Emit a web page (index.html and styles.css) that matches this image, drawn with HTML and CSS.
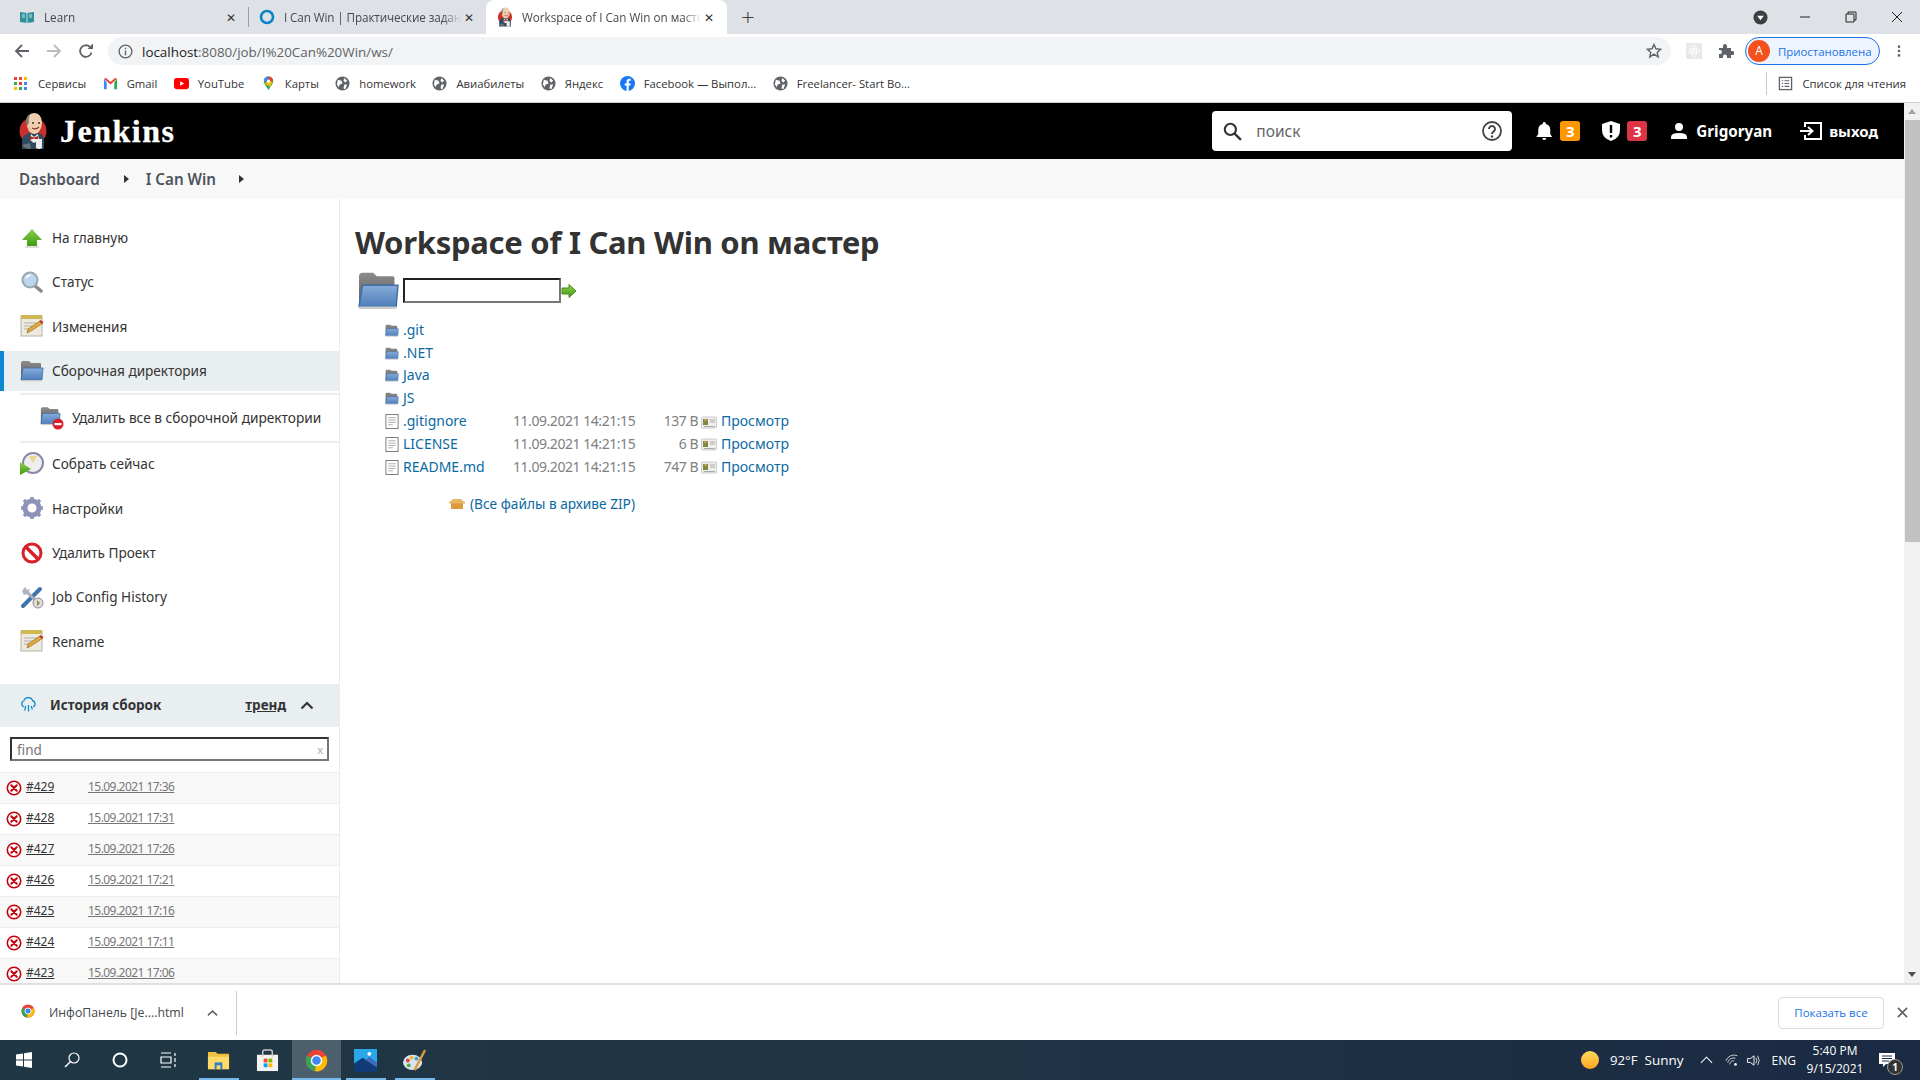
FILE: index.html
```html
<!doctype html>
<html>
<head>
	<meta charset="utf-8">
	<title>Workspace of I Can Win on мастер</title>
	<link rel="stylesheet" href="styles.css">
</head>

<body>

<svg class="defs" width="0" height="0">
	<defs>
		<linearGradient id="blue" x1="0" y1="0" x2="0" y2="1"><stop offset="0" stop-color="#86abd9"/><stop offset="1" stop-color="#4f7fbc"/></linearGradient>
		<linearGradient id="grey" x1="0" y1="0" x2="0" y2="1"><stop offset="0" stop-color="#8b8b8b"/><stop offset="1" stop-color="#5c5c5c"/></linearGradient>
		<linearGradient id="green" x1="0" y1="0" x2="0" y2="1"><stop offset="0" stop-color="#8fd14f"/><stop offset="1" stop-color="#3e9a0f"/></linearGradient>
		<symbol id="folder" viewBox="0 0 24 22">
			<path d="M1 3q0-2 2-2h6l2 2h9q1 0 1 1v15H1z" fill="url(#grey)"/>
			<path d="M1 20L3 8h20l-1 12z" fill="url(#blue)" stroke="#3f6ea8" stroke-width=".8"/>
			<rect x="1" y="20" width="21" height="1.4" fill="#ccc"/>
		</symbol>
		<symbol id="file" viewBox="0 0 14 16">
			<rect x=".5" y=".5" width="13" height="15" fill="#fff" stroke="#777"/>
			<path d="M3 4h8M3 6.5h8M3 9h8M3 11.5h5" stroke="#aaa"/>
		</symbol>
		<symbol id="view" viewBox="0 0 16 14">
			<rect x=".5" y="2" width="15" height="11" rx="1" fill="#eee" stroke="#ccc"/>
			<rect x="2" y="4" width="5" height="6" fill="#7d8a3e"/>
			<circle cx="4.5" cy="5" r="1.3" fill="#c9a066"/>
			<path d="M9 5h5M9 7h5M3 11.5h11" stroke="#aaa"/>
		</symbol>
		<symbol id="note" viewBox="0 0 24 24">
			<rect x="1" y="2" width="21" height="20" fill="#eeeade" stroke="#b5b2a6"/>
			<rect x="1" y="1" width="21" height="4" fill="#cfb754"/>
			<path d="M4 9h15M4 12h9M4 15h6" stroke="#b0b0b0"/>
			<path d="M7 19l1-4L20 7l3 2-12 8z" fill="#e3a93b" stroke="#8a5a1a" stroke-width=".6"/>
			<path d="M19 7.500l1.500-1.500 3 2-1.500 2z" fill="#c9372c"/>
		</symbol>
		<symbol id="fail" viewBox="0 0 16 16">
			<circle cx="8" cy="8" r="6.700" fill="#fff" stroke="#c4000a" stroke-width="1.600"/>
			<path d="M5.300 5.300l5.400 5.400M10.700 5.300l-5.400 5.400" stroke="#c4000a" stroke-width="2" stroke-linecap="round"/>
		</symbol>
		<symbol id="globe" viewBox="0 0 16 16">
			<circle cx="8" cy="8" r="7.500" fill="#5f6368"/>
			<path d="M3 4l4 1 1 3-3 1-1 3-2-3zM10 2l3 3-2 2-2-2zM10 9l3 0-2 5-2-1z" fill="#fff"/>
		</symbol>
		<symbol id="butler" viewBox="0 0 28 38">
			<circle cx="14" cy="19" r="13.500" fill="#c9302c"/>
			<path d="M3 37V27q2-5 8-6h8q6 1 6 7v9z" fill="#2f4a5f"/>
			<path d="M12 22l3 3 4-3 1 6-5 3-4-3z" fill="#f3f3f3"/>
			<path d="M11 24l4 1.500 4-1.500v4l-4-1.500-4 1.500z" fill="#b3261e"/>
			<path d="M8 11Q8 1 15 1q7 0 8 9 0 5-2 8-2 4-6 4-7-1-7-11z" fill="#f0cfae"/>
			<path d="M8 14Q6 8 8 5q1-2 3-3-2 5-1 9-1 1-2 3z" fill="#7d7d7d"/>
			<path d="M8 14q1 4 3 6l1-3-2-3z" fill="#e8bd98"/>
			<circle cx="14" cy="11" r=".9" fill="#222"/><circle cx="20" cy="11" r=".9" fill="#222"/>
			<path d="M13 16q4 2 7-1" fill="none" stroke="#8a3a2a" stroke-width="1.200"/>
			<path d="M17 27h6v9q-3 2-6 0z" fill="#eee"/>
			<path d="M3 33q3 4 9 4l-1-6z" fill="#f0cfae" opacity=".3"/>
		</symbol>
	</defs>
</svg>

<div class="tabstrip">
	<div class="tab">
		<svg class="tab-icon" viewBox="0 0 16 16"><path d="M1 3l7 1 7-1v10l-7 1-7-1z" fill="#2f8f9d"/><path d="M8 4v10" stroke="#bfe3e8"/><path d="M3 6h3M3 8h3M10 6h3M10 8h3" stroke="#bfe3e8"/></svg>
		<span class="tab-title">Learn</span>
		<span class="tab-close">✕</span>
	</div>
	<div class="tab tab-second">
		<svg class="tab-icon" viewBox="0 0 16 16"><circle cx="8" cy="8" r="6" fill="none" stroke="#0a84c6" stroke-width="2.600"/></svg>
		<span class="tab-title">I Can Win | Практические задан</span>
		<span class="tab-close">✕</span>
	</div>
	<div class="tab tab-active">
		<svg class="tab-icon"><use href="#butler"/></svg>
		<span class="tab-title">Workspace of I Can Win on масте</span>
		<span class="tab-close">✕</span>
	</div>
	<span class="new-tab">+</span>
	<div class="window-btns">
		<svg class="win-circle" viewBox="0 0 16 16"><circle cx="8" cy="8" r="7.500" fill="#3c4043"/><path d="M4.500 6h7L8 11z" fill="#fff"/></svg>
		<svg class="win-btn" viewBox="0 0 12 12"><path d="M1 6h10" stroke="#222"/></svg>
		<svg class="win-btn" viewBox="0 0 12 12"><path d="M3 3V1h8v8H9M1 3h8v8H1z" fill="none" stroke="#222"/></svg>
		<svg class="win-btn" viewBox="0 0 12 12"><path d="M1 1l10 10M11 1L1 11" stroke="#222"/></svg>
	</div>
</div>

<div class="toolbar">
	<svg class="nav-icon" viewBox="0 0 16 16"><path d="M15 8H2M8 2L2 8l6 6" fill="none" stroke="#5f6368" stroke-width="1.800"/></svg>
	<svg class="nav-icon" viewBox="0 0 16 16"><path d="M1 8h13M8 2l6 6-6 6" fill="none" stroke="#b9bcc0" stroke-width="1.800"/></svg>
	<svg class="nav-icon" viewBox="0 0 16 16"><path d="M13.500 9.500A5.800 5.800 0 1 1 12 4" fill="none" stroke="#5f6368" stroke-width="1.800"/><path d="M9.500 6H15V.5z" fill="#5f6368"/></svg>
	<div class="omnibox">
		<svg class="info" viewBox="0 0 16 16"><circle cx="8" cy="8" r="6.800" fill="none" stroke="#5f6368" stroke-width="1.400"/><path d="M8 7v5M8 4v1.600" stroke="#5f6368" stroke-width="1.500"/></svg>
		<span class="url"><b>localhost</b>:8080/job/I%20Can%20Win/ws/</span>
		<svg class="star" viewBox="0 0 16 16"><path d="M8 1.500l2 4.300 4.600.5-3.400 3.100 1 4.600L8 11.200l-4.200 2.800 1-4.600L1.400 6.300 6 5.800z" fill="none" stroke="#5f6368" stroke-width="1.400"/></svg>
	</div>
	<svg class="ext-react" viewBox="0 0 16 16"><rect width="16" height="16" fill="#e8e8e8"/><circle cx="8" cy="8" r="1.400" fill="#fff"/><g fill="none" stroke="#fff"><ellipse cx="8" cy="8" rx="6" ry="2.500"/><ellipse cx="8" cy="8" rx="2.500" ry="6"/></g></svg>
	<svg class="ext-puzzle" viewBox="0 0 16 16"><path d="M1 5h4V3a2 2 0 0 1 4 0v2h4v3h1.500a2 2 0 0 1 0 4H13v3H9v-1.500a2 2 0 0 0-4 0V15H1v-4h1a2 2 0 0 0 0-4H1z" fill="#5f6368"/></svg>
	<div class="profile">
		<span class="avatar">A</span>
		<span>Приостановлена</span>
	</div>
	<svg class="kebab" viewBox="0 0 4 16"><circle cx="2" cy="3" r="1.500" fill="#5f6368"/><circle cx="2" cy="8" r="1.500" fill="#5f6368"/><circle cx="2" cy="13" r="1.500" fill="#5f6368"/></svg>
</div>

<div class="bookmarks">
	<span class="bm bm-apps"><svg class="bm-icon" viewBox="0 0 13 13"><g fill="#ea4335"><rect width="3" height="3"/><rect x="5" width="3" height="3"/></g><rect x="10" width="3" height="3" fill="#fbbc05"/><rect y="5" width="3" height="3" fill="#34a853"/><rect x="5" y="5" width="3" height="3" fill="#ea4335"/><rect x="10" y="5" width="3" height="3" fill="#4285f4"/><rect y="10" width="3" height="3" fill="#fbbc05"/><rect x="5" y="10" width="3" height="3" fill="#34a853"/><rect x="10" y="10" width="3" height="3" fill="#4285f4"/></svg>Сервисы</span>
	<span class="bm"><svg class="bm-icon" viewBox="0 0 16 16"><path d="M1 3v11h3V7z" fill="#4285f4"/><path d="M12 7v7h3V3z" fill="#34a853"/><path d="M1 3l7 6 7-6-2-1-5 4-5-4z" fill="#ea4335"/></svg>Gmail</span>
	<span class="bm"><svg class="bm-icon" viewBox="0 0 16 16"><rect y="2" width="16" height="12" rx="3" fill="#f00"/><path d="M6.500 5.500v5L11 8z" fill="#fff"/></svg>YouTube</span>
	<span class="bm"><svg class="bm-icon" viewBox="0 0 16 16"><path d="M8 15C5 10 3 8 3 5.500a5 5 0 0 1 10 0C13 8 11 10 8 15z" fill="#34a853"/><path d="M3 5.500a5 5 0 0 1 5-5v5z" fill="#4285f4"/><path d="M8 .5a5 5 0 0 1 5 5H8z" fill="#ea4335"/><path d="M4 8l4-2.500 4.500 1-3 5z" fill="#fbbc05"/><circle cx="8" cy="5.500" r="1.800" fill="#fff"/></svg>Карты</span>
	<span class="bm"><svg class="bm-icon"><use href="#globe"/></svg>homework</span>
	<span class="bm"><svg class="bm-icon"><use href="#globe"/></svg>Авиабилеты</span>
	<span class="bm"><svg class="bm-icon"><use href="#globe"/></svg>Яндекс</span>
	<span class="bm"><svg class="bm-icon" viewBox="0 0 16 16"><circle cx="8" cy="8" r="8" fill="#1877f2"/><path d="M7 16V10H5V8h2V6q0-3 3-3h1.500v2H10.500Q9.300 5 9.300 6v2h2.200l-.4 2H9.300v6z" fill="#fff"/></svg>Facebook — Выпол...</span>
	<span class="bm"><svg class="bm-icon"><use href="#globe"/></svg>Freelancer- Start Bo...</span>
	<span class="reading">
		<svg class="bm-icon" viewBox="0 0 16 16"><rect x="1.500" y="1.500" width="13" height="13" fill="none" stroke="#5f6368" stroke-width="1.400"/><path d="M4 5h1.500M7 5h5M4 8h1.500M7 8h5M4 11h1.500M7 11h5" stroke="#5f6368" stroke-width="1.200"/></svg>
		Список для чтения
	</span>
</div>

<div class="page">
	<div class="page-main">
		<header class="jk-header">
			<svg class="jk-logo"><use href="#butler"/></svg>
			<span class="jk-name">Jenkins</span>
			<div class="jk-search">
				<svg class="jk-search-icon" viewBox="0 0 18 18"><circle cx="7" cy="7" r="5.300" fill="none" stroke="#333" stroke-width="2"/><path d="M11 11l6 6" stroke="#333" stroke-width="2.200"/></svg>
				<span class="jk-search-text">поиск</span>
				<svg class="jk-help" viewBox="0 0 20 20"><circle cx="10" cy="10" r="9" fill="none" stroke="#444" stroke-width="1.800"/><path d="M7 8a3 3 0 1 1 4.500 2.600Q10 11.500 10 13" fill="none" stroke="#444" stroke-width="1.900"/><circle cx="10" cy="15.500" r="1.200" fill="#444"/></svg>
			</div>
			<svg class="jk-bell" viewBox="0 0 16 20"><path d="M8 1a1.500 1.500 0 0 1 1.500 2Q14 4 14 9v4l2 3H0l2-3V9q0-5 4.500-6A1.500 1.500 0 0 1 8 1zM6 17h4a2 2 0 0 1-4 0z" fill="#fff"/></svg>
			<span class="jk-badge jk-badge-orange">3</span>
			<svg class="jk-shield" viewBox="0 0 18 20"><path d="M9 0l9 3v6q0 8-9 11Q0 17 0 9V3z" fill="#fff"/><path d="M9 4v8M9 14v2.400" stroke="#000" stroke-width="2.400"/></svg>
			<span class="jk-badge jk-badge-red">3</span>
			<svg class="jk-user" viewBox="0 0 16 16"><circle cx="8" cy="4" r="4" fill="#fff"/><path d="M0 16v-2q0-4 8-4t8 4v2z" fill="#fff"/></svg>
			<span class="jk-username">Grigoryan</span>
			<svg class="jk-exit" viewBox="0 0 22 18"><path d="M5 5V1h16v16H5v-4" fill="none" stroke="#fff" stroke-width="2"/><path d="M0 9h12M8 5l4.500 4L8 13" fill="none" stroke="#fff" stroke-width="2"/></svg>
			<span class="jk-logout">выход</span>
		</header>

		<div class="crumbs">
			<span class="crumb">Dashboard</span>
			<span class="crumb-arrow"></span>
			<span class="crumb">I Can Win</span>
			<span class="crumb-arrow"></span>
		</div>

		<div class="columns">
			<aside class="sidebar">
				<nav class="side-nav">
					<a class="side-item">
						<svg class="side-icon" viewBox="0 0 24 24"><path d="M12 3L2 14h5v6h10v-6h5z" fill="url(#green)"/><rect x="5" y="20" width="14" height="2" fill="#ddd"/></svg>
						На главную
					</a>
					<a class="side-item">
						<svg class="side-icon" viewBox="0 0 24 24"><path d="M14 15l7 6" stroke="#888" stroke-width="3.500" stroke-linecap="round"/><circle cx="10" cy="10" r="7.500" fill="#bcd6f0" stroke="#9aa6b2" stroke-width="2"/><path d="M6 8q2-3 5-3" stroke="#fff" stroke-width="1.500" fill="none"/></svg>
						Статус
					</a>
					<a class="side-item">
						<svg class="side-icon"><use href="#note"/></svg>
						Изменения
					</a>
					<a class="side-item side-active">
						<svg class="side-icon"><use href="#folder"/></svg>
						Сборочная директория
					</a>
					<a class="side-item side-sub">
						<svg class="side-icon" viewBox="0 0 24 24"><use href="#folder" width="21" height="20"/><circle cx="18" cy="18" r="5.500" fill="#d8202a"/><rect x="14.500" y="17" width="7" height="2.200" fill="#fff"/></svg>
						Удалить все в сборочной директории
					</a>
					<a class="side-item">
						<svg class="side-icon" viewBox="0 0 24 24"><circle cx="13" cy="11" r="10" fill="#eee" stroke="#8b88a8" stroke-width="2"/><path d="M13 11L9 4h8z" fill="#e8d98a"/><path d="M0 10l11 7-11 6z" fill="url(#green)"/></svg>
						Собрать сейчас
					</a>
					<a class="side-item">
						<svg class="side-icon" viewBox="0 0 24 24"><circle cx="12" cy="12" r="7" fill="none" stroke="#8f92b8" stroke-width="5"/><path d="M12 1v4M12 19v4M1 12h4M19 12h4M4 4l3 3M17 17l3 3M20 4l-3 3M7 17l-3 3" stroke="#8f92b8" stroke-width="3.500"/></svg>
						Настройки
					</a>
					<a class="side-item">
						<svg class="side-icon" viewBox="0 0 24 24"><circle cx="12" cy="12" r="9" fill="#fff" stroke="#d8202a" stroke-width="3"/><path d="M5.500 5.500l13 13" stroke="#d8202a" stroke-width="3.500"/></svg>
						Удалить Проект
					</a>
					<a class="side-item">
						<svg class="side-icon" viewBox="0 0 24 24"><path d="M3 21L20 4" stroke="#3f74ad" stroke-width="4" stroke-linecap="round"/><path d="M20 20L6 6" stroke="#aab" stroke-width="3"/><path d="M2 6l3-4 2 3 3-1-2 5-4 1z" fill="#b0b4c4"/><circle cx="18" cy="18" r="5" fill="#ddd" stroke="#8b88a8"/><path d="M17 15l3 3-3 3z" fill="#a08a3a"/></svg>
						Job Config History
					</a>
					<a class="side-item side-last">
						<svg class="side-icon"><use href="#note"/></svg>
						Rename
					</a>
				</nav>

				<div class="hist-head">
					<svg class="hist-cloud" viewBox="0 0 18 16"><path d="M4 10a3.500 3.500 0 0 1 0-6.500 5 5 0 0 1 9.500 0A3.500 3.500 0 0 1 14 10" fill="none" stroke="#0b88d1" stroke-width="1.400"/><path d="M6 9l-1 5M9 8v7M12 9l1 4" stroke="#0b88d1" stroke-width="1.300"/></svg>
					<span class="hist-title">История сборок</span>
					<span class="hist-trend">тренд</span>
					<svg class="hist-chev" viewBox="0 0 14 9"><path d="M1.500 7.500L7 2l5.500 5.500" fill="none" stroke="#333" stroke-width="2.200"/></svg>
				</div>
				<div class="hist-find">
					<div class="find-input"><span>find</span><span class="find-x">x</span></div>
				</div>
				<div class="hist-rows">
					<div class="hist-row"><svg class="fail-icon"><use href="#fail"/></svg><a class="build-no">#429</a><a class="build-date">15.09.2021 17:36</a></div>
					<div class="hist-row"><svg class="fail-icon"><use href="#fail"/></svg><a class="build-no">#428</a><a class="build-date">15.09.2021 17:31</a></div>
					<div class="hist-row"><svg class="fail-icon"><use href="#fail"/></svg><a class="build-no">#427</a><a class="build-date">15.09.2021 17:26</a></div>
					<div class="hist-row"><svg class="fail-icon"><use href="#fail"/></svg><a class="build-no">#426</a><a class="build-date">15.09.2021 17:21</a></div>
					<div class="hist-row"><svg class="fail-icon"><use href="#fail"/></svg><a class="build-no">#425</a><a class="build-date">15.09.2021 17:16</a></div>
					<div class="hist-row"><svg class="fail-icon"><use href="#fail"/></svg><a class="build-no">#424</a><a class="build-date">15.09.2021 17:11</a></div>
					<div class="hist-row"><svg class="fail-icon"><use href="#fail"/></svg><a class="build-no">#423</a><a class="build-date">15.09.2021 17:06</a></div>
				</div>
			</aside>

			<main class="content">
				<h1 class="title">Workspace of I Can Win on мастер</h1>
				<div class="path-row">
					<svg class="path-folder"><use href="#folder"/></svg>
					<div class="path-input"></div>
					<svg class="path-go" viewBox="0 0 16 16"><path d="M1 5h7V1.500L15 8l-7 6.500V11H1z" fill="url(#green)" stroke="#4d8a1a"/></svg>
				</div>
				<div class="files">
					<div class="file-row"><svg class="file-icon"><use href="#folder"/></svg><a>.git</a></div>
					<div class="file-row"><svg class="file-icon"><use href="#folder"/></svg><a>.NET</a></div>
					<div class="file-row"><svg class="file-icon"><use href="#folder"/></svg><a>Java</a></div>
					<div class="file-row"><svg class="file-icon"><use href="#folder"/></svg><a>JS</a></div>
					<div class="file-row"><svg class="file-icon"><use href="#file"/></svg><a>.gitignore</a><span class="file-date">11.09.2021 14:21:15</span><span class="file-size">137 B</span><svg class="view-icon"><use href="#view"/></svg><a>Просмотр</a></div>
					<div class="file-row"><svg class="file-icon"><use href="#file"/></svg><a>LICENSE</a><span class="file-date">11.09.2021 14:21:15</span><span class="file-size">6 B</span><svg class="view-icon"><use href="#view"/></svg><a>Просмотр</a></div>
					<div class="file-row"><svg class="file-icon"><use href="#file"/></svg><a>README.md</a><span class="file-date">11.09.2021 14:21:15</span><span class="file-size">747 B</span><svg class="view-icon"><use href="#view"/></svg><a>Просмотр</a></div>
				</div>
				<div class="zip-row">
					<svg class="zip-icon" viewBox="0 0 16 12"><path d="M1 4l3-3h8l3 3z" fill="#e8b566"/><rect x="2" y="4" width="12" height="7" fill="#d99a3e"/><rect x="0" y="3.500" width="16" height="2" fill="#e8b566"/></svg>
					<a>(Все файлы в архиве ZIP)</a>
				</div>
			</main>
		</div>
	</div>

	<div class="scrollbar">
		<span class="scroll-up"></span>
		<div class="scroll-track"><div class="scroll-thumb"></div></div>
		<span class="scroll-down"></span>
	</div>
</div>

<div class="downloads">
	<svg class="dl-icon" viewBox="0 0 16 16"><circle cx="8" cy="8" r="7.500" fill="#ea4335"/><path d="M8 8L1.500 4.500A7.500 7.500 0 0 0 7 15.500z" fill="#34a853"/><path d="M8 8l-1 7.500A7.500 7.500 0 0 0 14.500 4.500z" fill="#fbbc05"/><circle cx="8" cy="8" r="3.500" fill="#4285f4" stroke="#fff"/></svg>
	<span class="dl-name">ИнфоПанель [Je....html</span>
	<svg class="dl-chev" viewBox="0 0 12 8"><path d="M1 6.500L6 2l5 4.500" fill="none" stroke="#5f6368" stroke-width="1.800"/></svg>
	<span class="dl-sep"></span>
	<span class="dl-all">Показать все</span>
	<svg class="dl-close" viewBox="0 0 12 12"><path d="M1 1l10 10M11 1L1 11" stroke="#5f6368" stroke-width="1.800"/></svg>
</div>

<footer class="taskbar">
	<svg class="tb-start" viewBox="0 0 16 16"><path d="M0 2.500l7-1v6H0zM8 1.300L16 0v7.500H8zM0 8.500h7v6l-7-1zM8 8.500h8V16l-8-1.300z" fill="#fff"/></svg>
	<span class="tb-slot"><svg class="tb-glyph" viewBox="0 0 16 16"><circle cx="10" cy="6" r="5" fill="none" stroke="#fff" stroke-width="1.200"/><path d="M6.500 9.500L1 15" stroke="#fff" stroke-width="1.400"/></svg></span>
	<span class="tb-slot"><svg class="tb-glyph" viewBox="0 0 16 16"><circle cx="8" cy="8" r="6.500" fill="none" stroke="#fff" stroke-width="2"/></svg></span>
	<span class="tb-slot"><svg class="tb-glyph" viewBox="0 0 16 16"><path d="M1 1h10M1 15h10M1 5h10v6H1zM15 1v3M15 6v4M15 12v3" fill="none" stroke="#fff" stroke-width="1.200"/></svg></span>
	<span class="tb-app-slot tb-first tb-open"><svg class="tb-app" viewBox="0 0 24 20"><path d="M1 1h8l2 2h12v16H1z" fill="#f0c040"/><rect x="1" y="6" width="22" height="13" fill="#ffd969"/><rect x="8" y="12" width="8" height="7" fill="#2a7fc8"/><rect x="10" y="15" width="4" height="4" fill="#ffd969"/></svg></span>
	<span class="tb-app-slot"><svg class="tb-app" viewBox="0 0 24 24"><rect x="1" y="6" width="22" height="17" fill="#f3f3f3"/><path d="M7 8V3q0-2 2-2h6q2 0 2 2v5" fill="none" stroke="#ccc" stroke-width="1.500"/><rect x="8" y="10" width="4" height="4" fill="#f25022"/><rect x="13" y="10" width="4" height="4" fill="#7fba00"/><rect x="8" y="15" width="4" height="4" fill="#00a4ef"/><rect x="13" y="15" width="4" height="4" fill="#ffb900"/></svg></span>
	<span class="tb-app-slot tb-active"><svg class="tb-app" viewBox="0 0 16 16"><circle cx="8" cy="8" r="7.500" fill="#ea4335"/><path d="M8 8L1.500 4.500A7.500 7.500 0 0 0 7 15.500z" fill="#34a853"/><path d="M8 8l-1 7.500A7.500 7.500 0 0 0 14.500 4.500z" fill="#fbbc05"/><circle cx="8" cy="8" r="3.500" fill="#4285f4" stroke="#fff"/></svg></span>
	<span class="tb-app-slot tb-open"><svg class="tb-app" viewBox="0 0 24 24"><rect width="24" height="24" fill="#29a8ea"/><path d="M0 24V15l9-6 15 10v5z" fill="#123a78"/><path d="M9 9l15 10v-5l-8-6-3 3z" fill="#3f6bc0"/><circle cx="16" cy="5" r="2" fill="#fff"/></svg></span>
	<span class="tb-app-slot tb-open"><svg class="tb-app" viewBox="0 0 24 24"><ellipse cx="10" cy="14" rx="10" ry="8" fill="#d8e4ea"/><circle cx="5" cy="12" r="2" fill="#e2483d"/><circle cx="9" cy="9" r="2" fill="#f2b630"/><circle cx="14" cy="10" r="2" fill="#3f9ad6"/><circle cx="6" cy="17" r="2" fill="#55a845"/><path d="M12 22L23 1" stroke="#d99a3e" stroke-width="2.500"/></svg></span>

	<div class="tray">
		<span class="sun"></span>
		<span class="temp">92°F</span>
		<span class="sunny">Sunny</span>
		<svg class="tray-chev" viewBox="0 0 14 8"><path d="M1 7l6-6 6 6" fill="none" stroke="#fff" stroke-width="1.100"/></svg>
		<svg class="tray-wifi" viewBox="0 0 16 16"><path d="M1 9a10 10 0 0 1 13-6M3 11a7 7 0 0 1 9-5M5.500 13a4 4 0 0 1 5-4" fill="none" stroke="#ddd"/><circle cx="12" cy="13" r="1.500" fill="#fff"/></svg>
		<svg class="tray-speaker" viewBox="0 0 16 16"><path d="M1 6h3l4-3v10l-4-3H1z" fill="none" stroke="#fff"/><path d="M10 5q2 3 0 6M12 3q3 5 0 10" fill="none" stroke="#ddd"/></svg>
		<span class="lang">ENG</span>
		<div class="clock"><span>5:40 PM</span><span>9/15/2021</span></div>
		<div class="notify">
			<svg class="notify-icon" viewBox="0 0 16 16"><path d="M0 1h16v11H7l-3 3v-3H0z" fill="#fff"/><path d="M3 4h10M3 6.500h10M3 9h7" stroke="#1a2a43"/></svg>
			<span class="notify-badge">1</span>
		</div>
	</div>
</footer>

</body>
</html>
```

FILE: styles.css
```css
/* base */
html, body { margin: 0; height: 100%; }
body { width: 1920px; height: 1080px; overflow: hidden; display: flex; flex-direction: column; background: #fff; color: #333; font-family: "Noto Sans", "Open Sans", sans-serif; }
a { color: inherit; }
svg { flex: none; display: block; }
.defs { position: absolute; }

/* browser tabs */
.tabstrip { height: 34px; flex: none; display: flex; align-items: center; background: #dee1e6; font-family: "Open Sans", "Noto Sans", sans-serif; font-size: 11.700px; color: #45484c; }
.tab { width: 248px; height: 34px; box-sizing: border-box; display: flex; align-items: center; padding: 0 9px 0 19px; }
.tab-second { width: 238px; position: relative; padding: 0 9px 0 11px; letter-spacing: -.1px; }
.tab-second::before { content: ""; position: absolute; left: 0; top: 7px; height: 20px; border-left: 1px solid #9a9da1; }
.tab-active { width: 241px; background: #fff; border-radius: 8px 8px 0 0; padding: 0 10px 0 11px; }
.tab-icon { width: 16px; height: 16px; margin-right: 9px; }
.tab-active .tab-icon { width: 16px; height: 20px; margin-right: 9px; }
.tab-title { flex: 1; min-width: 0; white-space: nowrap; -webkit-mask-image: linear-gradient(to right, #000 90%, transparent); mask-image: linear-gradient(to right, #000 90%, transparent); }
.tab-close { width: 16px; text-align: center; font-size: 12px; color: #333; }
.new-tab { margin-left: 14px; font-size: 24px; font-weight: 300; color: #3c4043; line-height: 1; }
.window-btns { margin-left: auto; display: flex; align-items: center; padding-right: 17px; }
.win-circle { width: 15px; height: 15px; margin-right: 31px; }
.win-btn { width: 12px; height: 12px; margin-left: 34px; }
.win-circle + .win-btn { margin-left: 0; }

/* browser toolbar */
.toolbar { height: 34px; flex: none; display: flex; align-items: center; padding-left: 14px; box-sizing: border-box; font-family: "Open Sans", "Noto Sans", sans-serif; }
.nav-icon { width: 16px; height: 16px; margin-right: 16px; }
.omnibox { width: 1563px; height: 28px; margin-left: -2px; border-radius: 14px; background: #f1f3f4; display: flex; align-items: center; padding: 0 9px 0 10px; box-sizing: border-box; font-size: 13.400px; color: #5f6368; }
.info { width: 15px; height: 15px; margin-right: 9px; }
.url { flex: 1; padding-top: 1px; }
.url b { font-weight: 400; color: #202124; }
.star { width: 16px; height: 16px; }
.ext-react { width: 16px; height: 16px; margin-left: 15px; }
.ext-puzzle { width: 16px; height: 16px; margin-left: 16px; }
.profile { width: 135px; height: 28px; margin-left: 11px; box-sizing: border-box; border: 1px solid #1a73e8; border-radius: 14px; background: #eef4fe; display: flex; align-items: center; padding-left: 2px; font-size: 11.400px; color: #1a73e8; white-space: nowrap; }
.avatar { width: 22px; height: 22px; margin-right: 8px; border-radius: 50%; background: #f4511e; color: #fff; text-align: center; line-height: 22px; font-size: 12px; flex: none; }
.kebab { width: 4px; height: 14px; margin-left: 17px; }

/* bookmarks */
.bookmarks { height: 35px; flex: none; display: flex; align-items: center; padding: 0 0 3px 14px; box-sizing: border-box; border-bottom: 1px solid #d0d0d0; font-family: "Open Sans", "Noto Sans", sans-serif; font-size: 11.300px; color: #333; white-space: nowrap; }
.bm { display: flex; align-items: center; margin-right: 16.500px; }
.bm-icon { width: 15px; height: 15px; margin-right: 9px; }
.bm-apps .bm-icon { width: 13px; height: 13px; margin-right: 11px; }
.reading { margin-left: auto; padding: 4px 14px 4px 11px; border-left: 1px solid #ccc; display: flex; align-items: center; }

/* page viewport */
.page { flex: 1; min-height: 0; display: flex; }
.page-main { flex: 1; min-width: 0; display: flex; flex-direction: column; }
.scrollbar { width: 16px; flex: none; background: #f1f1f1; display: flex; flex-direction: column; align-items: center; }
.scroll-up { width: 0; flex: none; border: 4px solid transparent; border-top: 0; border-bottom: 5px solid #a3a3a3; margin-top: 6px; }
.scroll-track { flex: 1; width: 15px; margin-top: 6px; }
.scroll-thumb { height: 422px; background: #c1c1c1; }
.scroll-down { width: 0; border: 4px solid transparent; border-bottom: 0; border-top: 5px solid #505050; margin: 4px 0 6px; }

/* jenkins header */
.jk-header { height: 56px; flex: none; display: flex; align-items: center; background: #000; color: #fff; padding-left: 19px; }
.jk-logo { width: 28px; height: 38px; }
.jk-name { font-family: "Liberation Serif", serif; font-weight: 700; font-size: 32px; letter-spacing: 1.500px; margin-left: 13px; -webkit-text-stroke: .3px #fff; }
.jk-search { width: 300px; height: 40px; margin-left: auto; box-sizing: border-box; background: #fff; border-radius: 4px; display: flex; align-items: center; padding: 0 10px 0 11px; color: #666; font-size: 15.500px; }
.jk-search-icon { width: 19px; height: 19px; }
.jk-search-text { flex: 1; margin-left: 14px; }
.jk-help { width: 20px; height: 20px; }
.jk-bell { width: 16.500px; height: 20px; margin-left: 23.500px; }
.jk-badge { width: 20px; height: 20px; margin-left: 8px; border-radius: 3px; font-size: 15px; font-weight: 700; text-align: center; line-height: 20px; color: #fff; }
.jk-badge-orange { background: #ff9800; }
.jk-badge-red { background: #dc3545; }
.jk-shield { width: 18px; height: 20px; margin-left: 22px; margin-right: -1px; }
.jk-user { width: 16px; height: 16px; margin-left: 24px; }
.jk-username { margin-left: 9px; font-weight: 700; font-size: 15.200px; }
.jk-exit { width: 22px; height: 18px; margin-left: 28px; }
.jk-logout { margin-left: 7px; margin-right: 26px; font-weight: 700; font-size: 15px; }

/* breadcrumbs */
.crumbs { height: 40px; flex: none; display: flex; align-items: center; background: #f8f8f8; padding-left: 19px; font-size: 15.200px; font-weight: 600; color: #4d545d; }
.crumb-arrow { width: 0; border: 4px solid transparent; border-left: 5px solid #333; border-right: 0; margin: 0 17px 0 24px; }
.crumb-arrow:last-child { margin-left: 23px; }

/* sidebar */
.columns { flex: 1; min-height: 0; display: flex; }
.sidebar { width: 340px; flex: none; box-sizing: border-box; border-right: 1px solid #e9edf0; overflow: hidden; }
.side-nav { padding-top: 18.600px; }
.side-item { height: 40px; margin-bottom: 4.400px; box-sizing: border-box; display: flex; align-items: center; padding-left: 20px; font-size: 13.600px; color: #333; white-space: nowrap; }
.side-icon { width: 24px; height: 24px; margin-right: 8px; }
.side-active { background: #e9eef1; border-left: 4px solid #0b88d1; padding-left: 16px; margin-bottom: 2px; }
.side-sub { height: 50px; margin: 0 0 1px 20px; padding-left: 20px; border-top: 2px solid #e9eef1; border-bottom: 2px solid #e9eef1; font-size: 13.700px; }
.side-last { margin-bottom: 0; }

/* build history */
.hist-head { height: 43px; margin-top: 22.400px; display: flex; align-items: center; background: #e9eef1; padding-left: 20px; font-size: 13.500px; }
.hist-cloud { width: 17px; height: 16px; }
.hist-title { margin-left: 13px; font-weight: 700; }
.hist-trend { margin-left: auto; font-weight: 700; text-decoration: underline; }
.hist-chev { width: 14px; height: 9px; margin: 0 25px 0 14px; }
.hist-find { padding: 10px 10px 11px 10px; }
.find-input { height: 24px; box-sizing: border-box; display: flex; justify-content: space-between; align-items: center; border: 2px solid #767676; border-color: #333 #767676 #767676 #333; padding: 2px 4px 0 5px; font-size: 13.500px; color: #757575; background: #fff; }
.find-x { font-size: 11px; color: #aaa; }
.hist-rows { border-top: 1px solid #e9eef1; }
.hist-row { height: 31px; box-sizing: border-box; display: flex; align-items: center; padding: 0 0 2px 6px; border-bottom: 1px solid #e9eef1; font-size: 12px; }
.hist-row:nth-child(odd) { background: #f8f8f8; }
.fail-icon { width: 16px; height: 16px; margin-top: 2px; }
.build-no { width: 62px; margin-left: 4px; color: #333; text-decoration: underline; }
.build-date { color: #777; text-decoration: underline; letter-spacing: -.55px; }

/* workspace */
.content { flex: 1; min-width: 0; padding-left: 15px; font-size: 14px; }
.title { margin: 0; padding-top: 20px; font-size: 31px; letter-spacing: -.28px; font-weight: 700; line-height: 46px; color: #333; }
.path-row { display: flex; align-items: center; height: 36px; margin: 7px 0 0 2px; }
.path-folder { width: 43px; height: 39px; }
.path-input { width: 158px; height: 25px; margin-left: 3px; box-sizing: border-box; border: 2px solid #333; border-color: #222 #767676 #767676 #222; background: #fff; }
.path-go { width: 16px; height: 16px; margin-top: 2px; }
.files { margin: 10px 0 0 30px; color: #0b6aa2; }
.file-row { height: 22.800px; display: grid; grid-template-columns: 18px 110px 121px 64px 23px auto; align-items: center; justify-content: start; white-space: nowrap; }
.file-icon { width: 14px; height: 15px; margin-top: 2px; }
.file-row a { color: #0b6aa2; }
.file-date { color: #808080; letter-spacing: -.45px; }
.file-size { color: #808080; text-align: right; letter-spacing: -.5px; }
.view-icon { width: 16px; height: 14px; margin: 2px 0 0 3px; }
.zip-row { display: flex; align-items: center; margin: 16px 0 0 94px; color: #0b6aa2; font-size: 13.700px; }
.zip-icon { width: 16px; height: 12px; margin: 2px 5px 0 0; }

/* download shelf */
.downloads { height: 57px; flex: none; box-sizing: border-box; border-top: 2px solid #e0e0e0; display: flex; align-items: center; padding-left: 21px; font-family: "Open Sans", "Noto Sans", sans-serif; font-size: 12.300px; color: #45484c; }
.dl-icon { width: 14px; height: 14px; margin-right: 14px; margin-top: -4px; }
.dl-name { width: 158px; white-space: nowrap; }
.dl-chev { width: 11px; height: 8px; }
.dl-sep { height: 44px; border-left: 1px solid #ccc; margin-left: 18px; }
.dl-all { width: 106px; height: 32px; margin-left: auto; box-sizing: border-box; border: 1px solid #dadce0; border-radius: 4px; text-align: center; line-height: 30px; font-size: 11.500px; color: #1a73e8; }
.dl-close { width: 11px; height: 11px; margin: 0 12px 0 13px; }

/* windows taskbar */
.taskbar { height: 40px; flex: none; display: flex; align-items: center; background: linear-gradient(to right, #203745, #1f3445 50%, #1a2a43); color: #fff; font-family: "Open Sans", "Noto Sans", sans-serif; font-size: 13px; }
.tb-start { width: 16px; height: 16px; margin: 0 16px; }
.tb-slot { width: 48px; height: 40px; display: flex; align-items: center; justify-content: center; }
.tb-app-slot { width: 49px; height: 40px; display: flex; align-items: center; justify-content: center; }
.tb-first { margin-left: 2px; }
.tb-open { background: linear-gradient(#76b9ed, #76b9ed) center bottom / 40px 2px no-repeat; }
.tb-active { background: linear-gradient(#76b9ed, #76b9ed) center bottom / 100% 2px no-repeat, #4b5f6c; }
.tb-glyph { width: 16px; height: 16px; }
.tb-app { width: 23px; height: 23px; }
.tray { margin-left: auto; padding-right: 16px; display: flex; align-items: center; height: 40px; }
.sun { width: 18px; height: 18px; border-radius: 50%; background: linear-gradient(#ffd95e, #ffa51f); }
.temp { margin-left: 11px; font-size: 13.200px; }
.sunny { margin-left: 7px; font-size: 13.500px; }
.tray-chev { width: 13px; height: 8px; margin-left: 16px; }
.tray-wifi { width: 14px; height: 14px; margin-left: 12px; }
.tray-speaker { width: 16px; height: 15px; margin-left: 7px; }
.lang { margin-left: 10px; font-size: 12px; }
.clock { width: 70px; margin-left: 4px; display: flex; flex-direction: column; align-items: center; font-size: 12px; line-height: 18px; }
.notify { width: 34px; position: relative; display: flex; justify-content: center; }
.notify-icon { width: 16px; height: 16px; }
.notify-badge { position: absolute; left: 17px; top: 7px; width: 14px; height: 14px; border-radius: 50%; background: #333; border: 1px solid #999; font-size: 10px; line-height: 14px; text-align: center; font-weight: 700; }
```
